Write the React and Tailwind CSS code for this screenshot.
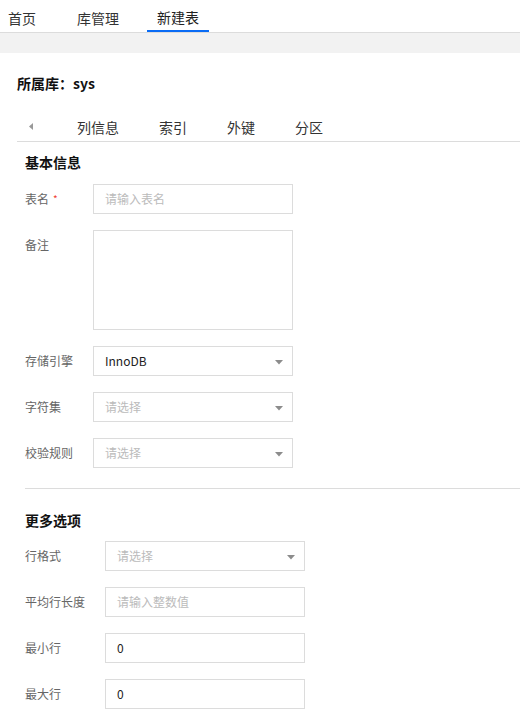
const font = { fontFamily: '"Noto Sans CJK SC", "Liberation Sans", sans-serif' };

function Caret() {
    return (
        <svg width="8" height="5" viewBox="0 0 8 5" className="absolute right-[9px] top-[13px]">
            <path d="M0 0 L8 0 L4 4.5 Z" fill="#8c8c8c" />
        </svg>
    );
}

function Field({ label, labelWidth, required, children }) {
    return (
        <div className="flex items-start">
            <div
                className={`${labelWidth} h-[30px] flex items-center text-[12px] leading-[16px] text-[#666] shrink-0`}
            >
                {label}
                {required && <span className="text-[#f04134] ml-[4px] text-[10px]">*</span>}
            </div>
            {children}
        </div>
    );
}

function TextBox({ value, placeholder, width = "w-[200px]" }) {
    return (
        <div className={`${width} h-[30px] border border-[#dcdcdc] flex items-center px-[11px] text-[12px] leading-[16px]`}>
            {value ? (
                <span className="text-[#222]">{value}</span>
            ) : (
                <span className="text-[#bbb]">{placeholder}</span>
            )}
        </div>
    );
}

function SelectBox({ value, placeholder = "请选择", width = "w-[200px]" }) {
    return (
        <div className={`${width} h-[30px] border border-[#dcdcdc] relative flex items-center px-[11px] text-[12px] leading-[16px]`}>
            {value ? (
                <span className="text-[#222]">{value}</span>
            ) : (
                <span className="text-[#bbb]">{placeholder}</span>
            )}
            <Caret />
        </div>
    );
}

export default function App() {
    return (
        <div className="w-[520px] h-[718px] bg-white overflow-hidden text-[#333]" style={font}>
            {/* top nav */}
            <div className="h-[33px] flex border-b border-[#dcdcdc] text-[14px] leading-[20px]">
                <div className="pl-[8px] pr-[10px] flex items-center pt-[3px]">首页</div>
                <div className="ml-[21px] px-[10px] flex items-center pt-[3px]">库管理</div>
                <div className="ml-[18px] px-[10px] flex items-center pt-[3px] border-b-2 border-[#0a6cf5] text-[#222]">
                    新建表
                </div>
            </div>
            <div className="h-[20px] bg-[#f2f2f2]" />

            <div className="pl-[17px]">
                <div className="pt-[20px] text-[14px] font-bold text-[#111] leading-[20px]">所属库：sys</div>

                {/* tabs */}
                <div className="mt-[21px] h-[28px] flex items-center border-b border-[#dcdcdc] text-[14px] leading-[20px] pb-[2px]">
                    <svg width="4" height="7" viewBox="0 0 4 7" className="ml-[12px]">
                        <path d="M4 0 L4 7 L0 3.5 Z" fill="#999" />
                    </svg>
                    <span className="ml-[44px]">列信息</span>
                    <span className="ml-[40px]">索引</span>
                    <span className="ml-[40px]">外键</span>
                    <span className="ml-[40px]">分区</span>
                </div>

                <div className="pl-[8px]">
                    <div className="mt-[10px] text-[14px] font-bold text-[#111] leading-[20px]">基本信息</div>

                    <div className="mt-[12px] flex flex-col gap-[16px]">
                        <Field label="表名" labelWidth="w-[68px]" required>
                            <TextBox placeholder="请输入表名" />
                        </Field>
                        <Field label="备注" labelWidth="w-[68px]">
                            <div className="w-[200px] h-[100px] border border-[#dcdcdc]" />
                        </Field>
                        <Field label="存储引擎" labelWidth="w-[68px]">
                            <SelectBox value="InnoDB" />
                        </Field>
                        <Field label="字符集" labelWidth="w-[68px]">
                            <SelectBox />
                        </Field>
                        <Field label="校验规则" labelWidth="w-[68px]">
                            <SelectBox />
                        </Field>
                    </div>

                    <div className="mt-[20px] border-t border-[#dcdcdc]" />

                    <div className="mt-[21px] text-[14px] font-bold text-[#111] leading-[20px]">更多选项</div>

                    <div className="mt-[11px] flex flex-col gap-[16px]">
                        <Field label="行格式" labelWidth="w-[80px]">
                            <SelectBox />
                        </Field>
                        <Field label="平均行长度" labelWidth="w-[80px]">
                            <TextBox placeholder="请输入整数值" />
                        </Field>
                        <Field label="最小行" labelWidth="w-[80px]">
                            <TextBox value="0" />
                        </Field>
                        <Field label="最大行" labelWidth="w-[80px]">
                            <TextBox value="0" />
                        </Field>
                    </div>
                </div>
            </div>
        </div>
    );
}
